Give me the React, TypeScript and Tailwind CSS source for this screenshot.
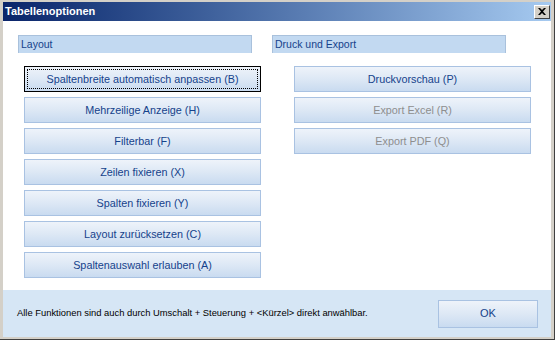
import React from 'react'

const leftButtons = [
  { label: 'Spaltenbreite automatisch anpassen (B)', focused: true },
  { label: 'Mehrzeilige Anzeige (H)' },
  { label: 'Filterbar (F)' },
  { label: 'Zeilen fixieren (X)' },
  { label: 'Spalten fixieren (Y)' },
  { label: 'Layout zurücksetzen (C)' },
  { label: 'Spaltenauswahl erlauben (A)' },
]

const rightButtons = [
  { label: 'Druckvorschau (P)' },
  { label: 'Export Excel (R)', disabled: true },
  { label: 'Export PDF (Q)', disabled: true },
]

function OptionButton({ label, focused, disabled }: { label: string; focused?: boolean; disabled?: boolean }) {
  return (
    <button
      className={
        'relative flex h-[26px] w-[237px] items-center justify-center border bg-gradient-to-b from-[#eef3fa] via-[#dde8f5] to-[#c9dbf0] text-[10.8px] ' +
        (focused ? 'border-black ' : 'border-[#a9c2e2] ') +
        (disabled ? 'text-[#8e8e8e]' : 'text-[#15428b]')
      }
    >
      {focused && <span className="absolute inset-[2px] border border-dotted border-black" />}
      <span className="relative">{label}</span>
    </button>
  )
}

function SectionHeader({ title }: { title: string }) {
  return (
    <div className="flex h-[18px] w-[234px] items-center border-x border-t border-[#a9c1dc] bg-[#c2d9f1] pl-[2px] text-[10.5px] text-[#15428b]">
      {title}
    </div>
  )
}

export default function App() {
  return (
    <div
      className="flex h-[340px] w-[555px] flex-col border-b border-r border-[#404040] bg-[#d4d0c8] pb-[2px] pl-[3px] pr-[3px] pt-[2px]"
      style={{ fontFamily: '"Liberation Sans", Arial, sans-serif' }}
    >
      {/* Title bar */}
      <div className="flex h-[19px] items-center justify-between bg-gradient-to-r from-[#0a246a] to-[#a6caf0] pl-[2px] pr-[1px]">
        <span className="text-[11px] font-bold text-white">Tabellenoptionen</span>
        <div className="flex h-[14px] w-[16px] items-center justify-center border-b border-l border-r border-t border-b-[#404040] border-l-white border-r-[#404040] border-t-white bg-[#d4d0c8]">
          <svg width="8" height="7" viewBox="0 0 8 7">
            <path d="M0 0h2l2 2 2-2h2L5 3.5 8 7H6L4 5 2 7H0l3-3.5z" fill="#000" />
          </svg>
        </div>
      </div>

      {/* Content */}
      <div className="flex flex-1 bg-white pt-[14px]">
        <div className="w-[269px] pl-[15px]">
          <SectionHeader title="Layout" />
          <div className="ml-[6px] mt-[13px] flex flex-col gap-[5px]">
            {leftButtons.map((b) => (
              <OptionButton key={b.label} label={b.label} focused={b.focused} />
            ))}
          </div>
        </div>
        <div>
          <SectionHeader title="Druck und Export" />
          <div className="ml-[22px] mt-[13px] flex flex-col gap-[5px]">
            {rightButtons.map((b) => (
              <OptionButton key={b.label} label={b.label} disabled={b.disabled} />
            ))}
          </div>
        </div>
      </div>

      {/* Footer */}
      <div className="flex h-[47px] items-center justify-between bg-[#d6e6f5] pl-[14px] pr-[13px]">
        <span className="text-[9.4px] text-black">
          Alle Funktionen sind auch durch Umschalt + Steuerung + &lt;Kürzel&gt; direkt anwählbar.
        </span>
        <button className="h-[28px] w-[100px] border border-[#a9c2e2] bg-gradient-to-b from-[#eef3fa] via-[#dde8f5] to-[#c9dbf0] text-[11px] text-[#15428b]">
          OK
        </button>
      </div>
    </div>
  )
}
